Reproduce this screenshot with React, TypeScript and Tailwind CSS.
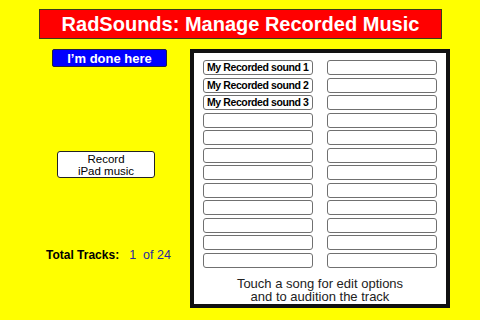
import React from "react";

const names = ["My Recorded sound 1", "My Recorded sound 2", "My Recorded sound 3"];

export default function App() {
  const rows = Array.from({ length: 12 }, (_, i) => i);
  return (
    <div
      className="w-[480px] h-[320px] bg-[#ffff00] overflow-hidden flex flex-col"
      style={{ fontFamily: '"Liberation Sans", Arial, sans-serif' }}
    >
      <div className="ml-[39px] mt-[9px] w-[403px] h-[30px] bg-[#ff0000] border border-[#3a3a1a] flex items-center justify-center">
        <span className="text-white font-bold text-[20px] leading-none">
          RadSounds: Manage Recorded Music
        </span>
      </div>
      <div className="flex mt-[10px]">
        <div className="w-[190px] flex flex-col items-start">
          <button className="ml-[52px] w-[115px] h-[18px] bg-[#0000ff] border border-[#222244] rounded-[2px] text-white font-bold text-[13px] leading-none flex items-center justify-center">
            I’m done here
          </button>
          <button className="ml-[57px] mt-[84px] w-[98px] h-[27px] bg-white border border-[#222] rounded-[3px] text-black text-[11.5px] leading-[12px] flex flex-col items-center justify-center">
            <span>Record</span>
            <span>iPad music</span>
          </button>
          <div className="ml-[46px] mt-[69px] h-[16px] flex items-center">
            <span className="font-bold text-[12px] text-black">Total Tracks:</span>
            <span className="ml-[10px] text-[12.5px] text-[#2a2aa0]">1&nbsp; of 24</span>
          </div>
        </div>
        <div className="w-[260px] h-[259px] bg-white border-4 border-[#111] flex flex-col">
          <div className="grid grid-cols-2 gap-x-[14px] gap-y-[2.5px] px-[9px] pt-[7px] auto-rows-[15px]">
            {rows.map((r) => (
              <React.Fragment key={r}>
                <div className="border-[1.5px] border-[#707070] rounded-[3px] bg-white flex items-center pl-[3px] overflow-hidden whitespace-nowrap">
                  {names[r] && (
                    <span className="font-bold text-[10.5px] leading-none text-black tracking-[-0.4px]">
                      {names[r]}
                    </span>
                  )}
                </div>
                <div className="border-[1.5px] border-[#707070] rounded-[3px] bg-white" />
              </React.Fragment>
            ))}
          </div>
          <div className="mt-[9px] flex flex-col items-center text-[13px] leading-[13px] text-[#222]">
            <span>Touch a song for edit options</span>
            <span>and to audition the track</span>
          </div>
        </div>
      </div>
    </div>
  );
}
